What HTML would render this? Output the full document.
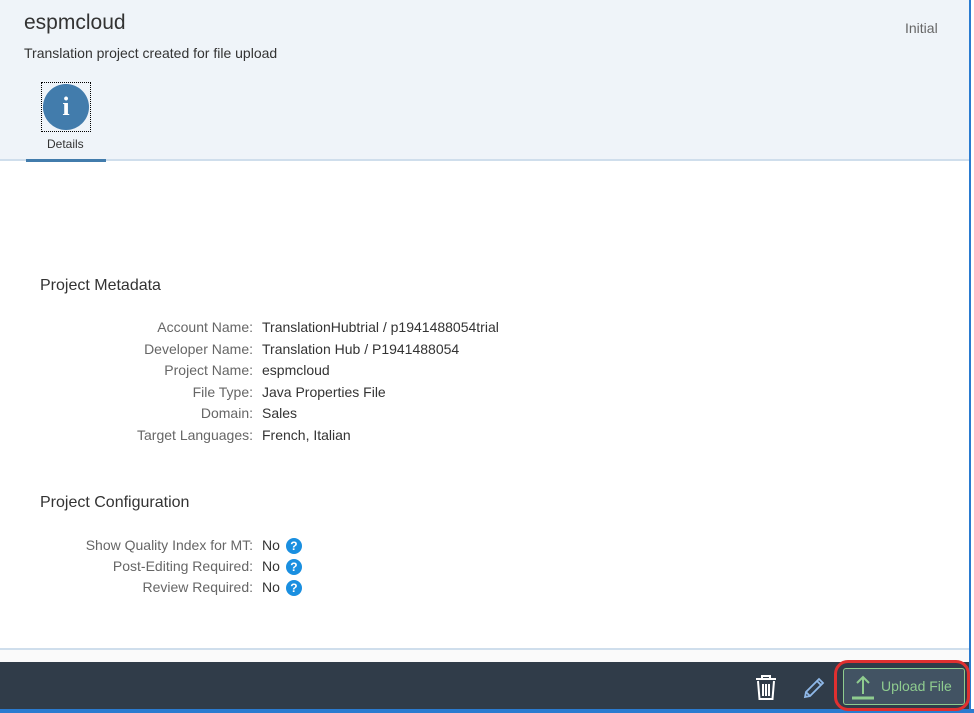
<!DOCTYPE html>
<html><head><style>
*{margin:0;padding:0;box-sizing:border-box}
body{width:974px;height:713px;position:relative;background:#fff;font-family:"Liberation Sans",sans-serif;overflow:hidden;color:#333}
.hdr{position:absolute;left:0;top:0;width:969px;height:161px;background:#eff4f9;border-bottom:2px solid #cfdeec}
.title{position:absolute;left:24px;top:11px;font-size:21px;color:#333}
.sub{position:absolute;left:24px;top:45px;font-size:14px;color:#333}
.status{position:absolute;left:905px;top:20px;font-size:14px;color:#666}
.icon{position:absolute;left:41px;top:82px;width:50px;height:50px;border:1px dotted #000}
.icon div{position:absolute;left:1px;top:1px;width:46px;height:46px;border-radius:50%;background:#427cac;color:#fff;font:bold 26px "Liberation Serif",serif;text-align:center;line-height:46px}
.tabl{position:absolute;left:47px;top:137px;font-size:12px;color:#333}
.ul{position:absolute;left:26px;top:159px;width:80px;height:3px;background:#427cac}
.vline{position:absolute;left:969px;top:0;width:2px;height:713px;background:#2a7bd0}
h2{position:absolute;left:40px;font-size:16px;font-weight:normal;color:#333}
.row{position:absolute;font-size:14px;height:20px;line-height:20px}
.lab{position:absolute;right:calc(974px - 253px);white-space:nowrap;color:#666;text-align:right}
.val{position:absolute;left:262px;white-space:nowrap;color:#333}
.q{display:inline-block;width:16px;height:16px;border-radius:50%;background:#1a8fe0;color:#fff;font:bold 12px "Liberation Sans",sans-serif;text-align:center;line-height:16px;vertical-align:middle;margin-left:6px}
.sep{position:absolute;left:0;top:648px;width:969px;height:2px;background:#cfdeec}
.gap{position:absolute;left:0;top:650px;width:969px;height:12px;background:#fafafa}
.ftr{position:absolute;left:0;top:662px;width:969px;height:47px;background:#303c49}
.bline{position:absolute;left:0;top:709px;width:974px;height:4px;background:#2a7bd0}
.btn{position:absolute;left:843px;top:668px;width:122px;height:37px;border:1px solid #8fcc8f;border-radius:3px;background:#425363;color:#8fcc8f;font-size:14px;line-height:35px;padding-left:37px}
.ring{position:absolute;left:834px;top:660px;width:136px;height:51px;border:3px solid #e03030;border-radius:14px}
</style></head><body>
<div class="hdr">
<div class="title">espmcloud</div>
<div class="sub">Translation project created for file upload</div>
<div class="status">Initial</div>
<div class="icon"><div>i</div></div>
<div class="tabl">Details</div>
<div class="ul"></div>
</div>
<div class="vline"></div>
<h2 style="top:277px">Project Metadata</h2>
<div class="row" style="top:317px;left:0;width:974px"><span class="lab">Account Name:</span><span class="val">TranslationHubtrial / p1941488054trial</span></div>
<div class="row" style="top:339px;left:0;width:974px"><span class="lab">Developer Name:</span><span class="val">Translation Hub / P1941488054</span></div>
<div class="row" style="top:360px;left:0;width:974px"><span class="lab">Project Name:</span><span class="val">espmcloud</span></div>
<div class="row" style="top:382px;left:0;width:974px"><span class="lab">File Type:</span><span class="val">Java Properties File</span></div>
<div class="row" style="top:403px;left:0;width:974px"><span class="lab">Domain:</span><span class="val">Sales</span></div>
<div class="row" style="top:425px;left:0;width:974px"><span class="lab">Target Languages:</span><span class="val">French, Italian</span></div>
<h2 style="top:494px">Project Configuration</h2>
<div class="row" style="top:535px;left:0;width:974px"><span class="lab">Show Quality Index for MT:</span><span class="val">No<span class="q">?</span></span></div>
<div class="row" style="top:556px;left:0;width:974px"><span class="lab">Post-Editing Required:</span><span class="val">No<span class="q">?</span></span></div>
<div class="row" style="top:577px;left:0;width:974px"><span class="lab">Review Required:</span><span class="val">No<span class="q">?</span></span></div>
<div class="sep"></div><div class="gap"></div>
<div class="ftr"></div>
<div class="bline"></div>
<svg style="position:absolute;left:754px;top:675px" width="24" height="26" viewBox="0 0 24 26" fill="none" stroke="#fff" stroke-width="2">
<path d="M2 4h20M8 4V1h8v3M4 6l1.5 18h13L20 6M9 9v12M12 9v12M15 9v12"/></svg>
<svg style="position:absolute;left:802px;top:676px" width="24" height="24" viewBox="0 0 24 24" fill="none" stroke="#8fb8e8" stroke-width="1.8">
<path d="M3 21l1-5L17 3l4 4L8 20zM15 5l4 4M4 16l4 4"/></svg>
<div class="btn">Upload File</div>
<svg style="position:absolute;left:851px;top:674px" width="24" height="26" viewBox="0 0 24 26" fill="none" stroke="#8fcc8f" stroke-width="2">
<path d="M12 20V3M6 9l6-6 6 6"/><path d="M1 24h22" stroke-width="3"/></svg>
<div class="ring"></div>
</body></html>
